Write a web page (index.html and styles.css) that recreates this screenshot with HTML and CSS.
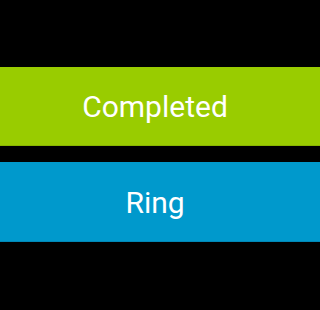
FILE: index.html
```html
<!DOCTYPE html>
<html>
<head>
<meta charset="utf-8">
<link rel="stylesheet" href="styles.css">
</head>
<body>
<div class="screen">
  <div class="btn btn-green"><span class="label">Completed</span></div>
  <div class="btn btn-blue"><span class="label">Ring</span></div>
</div>
</body>
</html>
```

FILE: styles.css
```css
html, body {
  margin: 0;
  padding: 0;
  background: #000;
}
.screen {
  width: 100%;
  height: 100vh;
  box-sizing: border-box;
  padding-top: 67px;
  display: flex;
  flex-direction: column;
  gap: 16px;
}
.btn {
  display: flex;
  align-items: center;
  color: #fff;
  font-family: Roboto, "Noto Sans", sans-serif;
  font-size: 30px;
  box-sizing: border-box;
}
.label {
  width: 310px;
  text-align: center;
}
.btn-green {
  height: 79px;
  background: #99cc00;
  border-bottom: 1px solid #88b600;
}
.btn-blue {
  height: 80px;
  padding-top: 2px;
  background: #0099cc;
  border-bottom: 1px solid #0088b6;
}
```
